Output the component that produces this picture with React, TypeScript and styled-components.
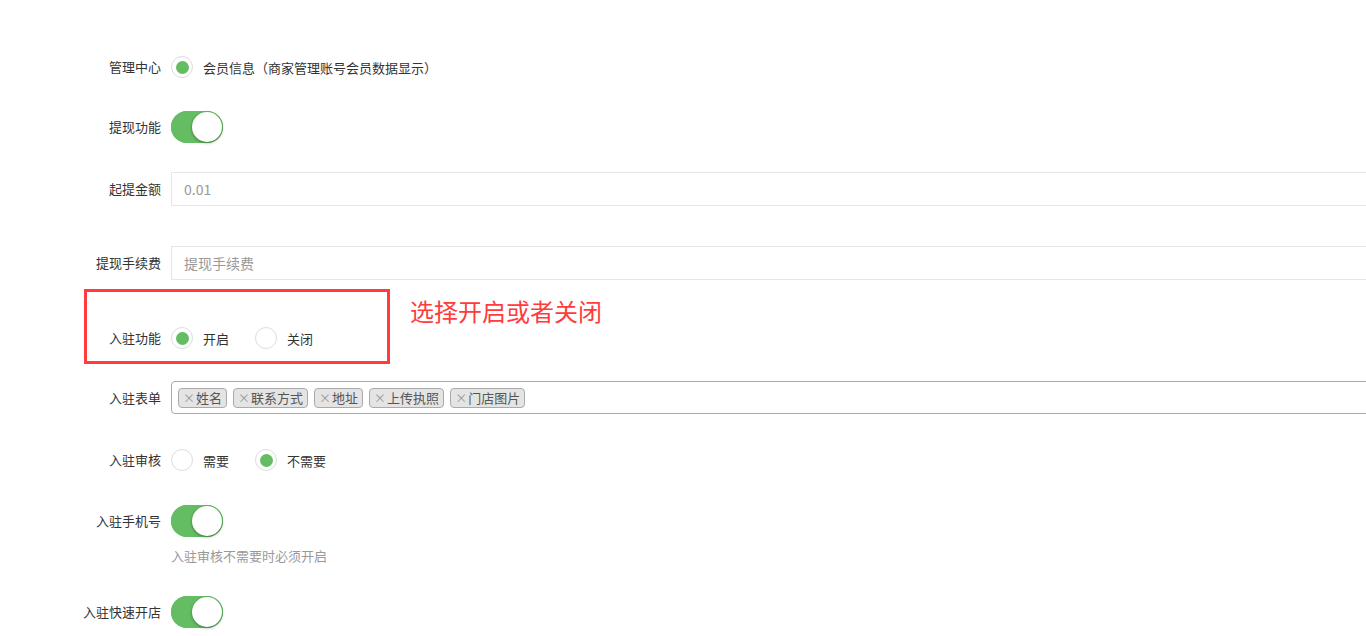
import React from 'react';
import styled, { createGlobalStyle } from 'styled-components';

const GlobalStyle = createGlobalStyle`
  html, body {
    margin: 0;
    padding: 0;
    background: #fff;
    overflow: hidden;
  }
  body {
    font-family: "Noto Sans CJK SC", "Noto Sans", "Liberation Sans", sans-serif;
    font-size: 13px;
    color: #333;
  }
`;

const Page = styled.div`
  width: 1366px;
  height: 636px;
  padding-top: 50px;
  box-sizing: border-box;
  overflow: hidden;
`;

const FormGroup = styled.div<{ $mb: number }>`
  position: relative;
  display: flex;
  align-items: flex-start;
  margin-bottom: ${(p) => p.$mb}px;
`;

const Label = styled.label`
  flex: 0 0 171px;
  height: 34px;
  line-height: 34px;
  text-align: right;
  padding-right: 10px;
  box-sizing: border-box;
  white-space: nowrap;
  color: #333;
`;

const Control = styled.div`
  flex: 1;
  min-width: 0;
  display: flex;
  flex-direction: column;
`;

const RadioGroup = styled.div`
  display: flex;
  align-items: center;
  height: 34px;
  gap: 12px;
`;

const RadioOption = styled.label`
  display: flex;
  align-items: center;
  gap: 10px;
  min-width: 72px;
  color: #333;
`;

const RadioCircle = styled.span<{ $checked?: boolean }>`
  width: 20px;
  height: 20px;
  border: 1px solid #ddd;
  border-radius: 50%;
  background: #fff;
  display: flex;
  align-items: center;
  justify-content: center;
  flex: 0 0 auto;

  &::after {
    content: '';
    width: 13px;
    height: 13px;
    border-radius: 50%;
    background: ${(p) => (p.$checked ? '#64bd63' : 'transparent')};
  }
`;

const SwitchWrap = styled.div`
  height: 34px;
  display: flex;
  align-items: center;
`;

const Switch = styled.span`
  position: relative;
  width: 52px;
  height: 32px;
  border-radius: 16px;
  background: #64bd63;
  box-shadow: inset 0 0 0 16px #64bd63;
  display: block;

  &::after {
    content: '';
    position: absolute;
    top: 1px;
    right: 1px;
    width: 30px;
    height: 30px;
    border-radius: 50%;
    background: #fff;
    box-shadow: 0 1px 3px rgba(0, 0, 0, 0.4);
  }
`;

const TextInput = styled.div`
  width: 1300px;
  height: 34px;
  border: 1px solid #e5e6e7;
  box-sizing: border-box;
  padding: 0 12px;
  line-height: 32px;
  font-size: 14px;
  color: #999;
  background: #fff;
`;

const TagBox = styled.div`
  width: 1300px;
  height: 33px;
  border: 1px solid #aaa;
  border-radius: 4px;
  box-sizing: border-box;
  display: flex;
  align-items: center;
  gap: 6px;
  padding: 0 6px;
  background: #fff;
`;

const Tag = styled.span`
  height: 20px;
  line-height: 18px;
  box-sizing: border-box;
  padding: 0 4px;
  border: 1px solid #aaa;
  border-radius: 4px;
  background: #e4e4e4;
  color: #555;
  white-space: nowrap;
`;

const TagRemove = styled.span`
  color: #999;
  font-size: 12px;
  margin-right: 1px;
`;

const HelpText = styled.div`
  margin-top: 9px;
  color: #999;
  line-height: 18px;
`;

const Highlight = styled.div`
  position: absolute;
  left: 84px;
  top: -32px;
  width: 306px;
  height: 75px;
  border: 3px solid #ff3b3b;
  box-sizing: border-box;
  pointer-events: none;
`;

const Callout = styled.div`
  position: absolute;
  left: 410px;
  top: -25px;
  font-size: 24px;
  line-height: 30px;
  color: #ff3b3b;
  white-space: nowrap;
`;

const Radio = ({ checked, text }: { checked?: boolean; text: string }) => (
  <RadioOption>
    <RadioCircle $checked={checked} />
    <span>{text}</span>
  </RadioOption>
);

const formTags = ['姓名', '联系方式', '地址', '上传执照', '门店图片'];

export default function App() {
  return (
    <>
      <GlobalStyle />
      <Page>
        <FormGroup $mb={26}>
          <Label>管理中心</Label>
          <Control>
            <RadioGroup>
              <Radio checked text="会员信息（商家管理账号会员数据显示）" />
            </RadioGroup>
          </Control>
        </FormGroup>

        <FormGroup $mb={28}>
          <Label>提现功能</Label>
          <Control>
            <SwitchWrap>
              <Switch />
            </SwitchWrap>
          </Control>
        </FormGroup>

        <FormGroup $mb={40}>
          <Label>起提金额</Label>
          <Control>
            <TextInput>0.01</TextInput>
          </Control>
        </FormGroup>

        <FormGroup $mb={41}>
          <Label>提现手续费</Label>
          <Control>
            <TextInput>提现手续费</TextInput>
          </Control>
        </FormGroup>

        <FormGroup $mb={26}>
          <Highlight />
          <Callout>选择开启或者关闭</Callout>
          <Label>入驻功能</Label>
          <Control>
            <RadioGroup>
              <Radio checked text="开启" />
              <Radio text="关闭" />
            </RadioGroup>
          </Control>
        </FormGroup>

        <FormGroup $mb={28}>
          <Label>入驻表单</Label>
          <Control>
            <TagBox>
              {formTags.map((t) => (
                <Tag key={t}>
                  <TagRemove>×</TagRemove>
                  {t}
                </Tag>
              ))}
            </TagBox>
          </Control>
        </FormGroup>

        <FormGroup $mb={27}>
          <Label>入驻审核</Label>
          <Control>
            <RadioGroup>
              <Radio text="需要" />
              <Radio checked text="不需要" />
            </RadioGroup>
          </Control>
        </FormGroup>

        <FormGroup $mb={30}>
          <Label>入驻手机号</Label>
          <Control>
            <SwitchWrap>
              <Switch />
            </SwitchWrap>
            <HelpText>入驻审核不需要时必须开启</HelpText>
          </Control>
        </FormGroup>

        <FormGroup $mb={0}>
          <Label>入驻快速开店</Label>
          <Control>
            <SwitchWrap>
              <Switch />
            </SwitchWrap>
          </Control>
        </FormGroup>
      </Page>
    </>
  );
}
